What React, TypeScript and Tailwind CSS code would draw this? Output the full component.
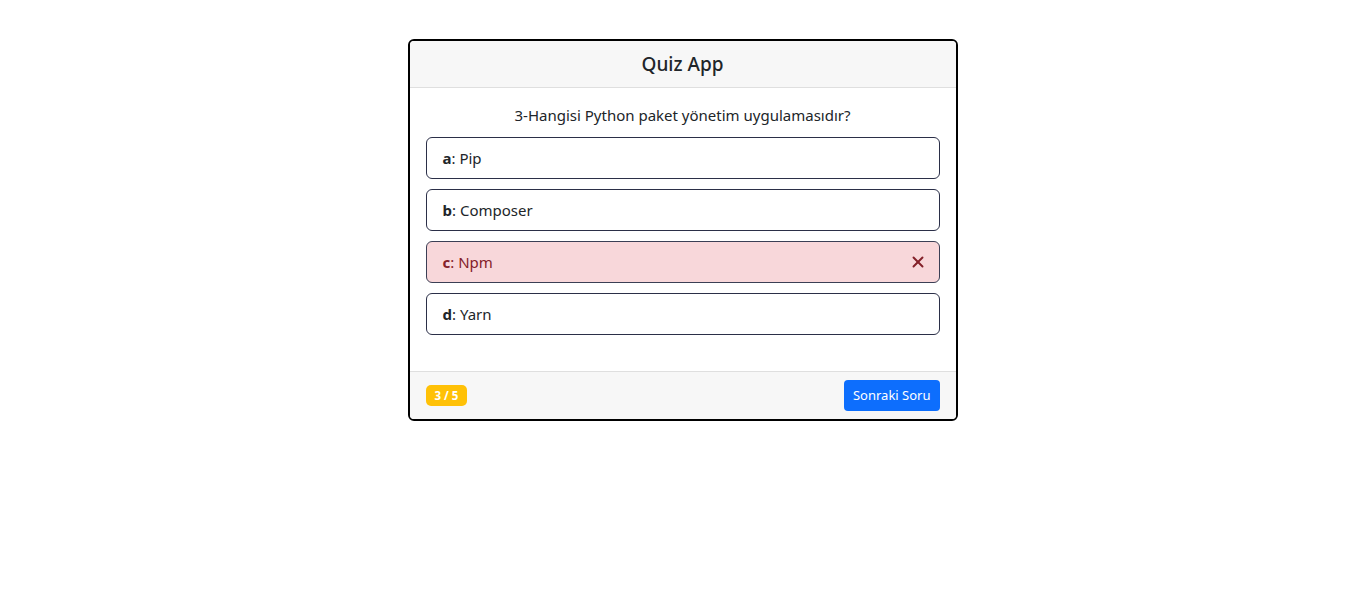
import { X } from 'lucide-react';

const options = [
  { key: 'a', text: 'Pip', state: 'idle' },
  { key: 'b', text: 'Composer', state: 'idle' },
  { key: 'c', text: 'Npm', state: 'wrong' },
  { key: 'd', text: 'Yarn', state: 'idle' },
];

export default function App() {
  return (
    <div className="min-h-screen bg-white pt-[39px] font-['Noto_Sans',sans-serif] text-[#212529]">
      <div className="mx-auto w-[550px] overflow-hidden rounded-[6px] border-2 border-black bg-white">
        <div className="border-b border-[#dfdfdf] bg-[#f7f7f7] py-[9px] text-center text-[19px] font-medium leading-[28px]">
          Quiz App
        </div>
        <div className="px-4 pt-[15px] pb-[36px]">
          <div className="mb-[10px] text-center text-[15px] leading-[24px]">
            3-Hangisi Python paket yönetim uygulamasıdır?
          </div>
          <div className="flex flex-col gap-[10px]">
            {options.map((o) => (
              <div
                key={o.key}
                className={
                  o.state === 'wrong'
                    ? 'flex h-[42px] items-center justify-between rounded-[6px] border border-[#3b3f55] bg-[#f8d7da] px-4 text-[15px] text-[#842029]'
                    : 'flex h-[42px] items-center justify-between rounded-[6px] border border-[#2b2f48] bg-white px-4 text-[15px]'
                }
              >
                <span>
                  <b className="font-bold">{o.key}</b>: {o.text}
                </span>
                {o.state === 'wrong' && <X size={18} strokeWidth={2.6} className="-mr-[4px] text-[#842029]" />}
              </div>
            ))}
          </div>
        </div>
        <div className="flex items-center justify-between border-t border-[#dfdfdf] bg-[#f7f7f7] px-4 py-[8px]">
          <span className="rounded-[5px] bg-[#ffc107] px-[9px] py-[3px] text-[11.5px] font-bold leading-[15px] text-white">
            3 / 5
          </span>
          <button className="h-[31px] rounded-[4px] bg-[#0d6efd] px-[9px] text-[13px] text-white">
            Sonraki Soru
          </button>
        </div>
      </div>
    </div>
  );
}
